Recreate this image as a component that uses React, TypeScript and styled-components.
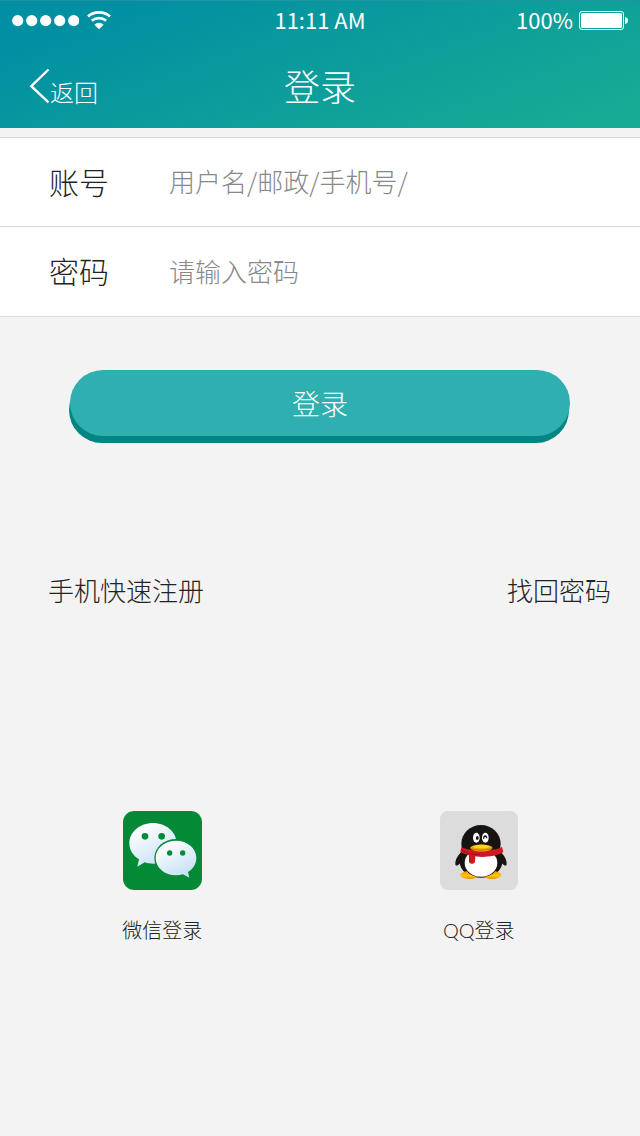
import React from 'react';
import styled, { createGlobalStyle } from 'styled-components';

const GlobalStyle = createGlobalStyle`
  * { box-sizing: border-box; }
  body {
    margin: 0;
    background: #f3f3f3;
    color: #222;
    font-family: "Noto Sans CJK SC", "Noto Sans", sans-serif;
    font-weight: 300;
  }
  button, input { font: inherit; color: inherit; }
  a { color: inherit; text-decoration: none; }
`;

const Header = styled.header`
  height: 128px;
  color: #fff;
  background: linear-gradient(160deg, #008fa3 12%, #18ab94 94%);
  border-top: 1px solid #2095a2;
`;

const StatusBar = styled.div`
  display: grid;
  grid-template-columns: 1fr auto 1fr;
  align-items: center;
  height: 39px;
  padding: 0 12px;
  font-size: 22px;
  line-height: 36px;
  font-weight: 400;
`;

const StatusText = styled.span`
  padding-bottom: 3px;
`;

const Signal = styled.div`
  display: flex;
  align-items: center;
  gap: 8px;
`;

const Power = styled.div`
  display: flex;
  align-items: center;
  justify-content: flex-end;
  gap: 6px;
`;

const TitleBar = styled.div`
  display: grid;
  grid-template-columns: 1fr auto 1fr;
  align-items: center;
  height: 88px;
  padding: 4px 28px 0;
`;

const BackButton = styled.button`
  display: flex;
  align-items: center;
  justify-self: start;
  padding: 0;
  border: 0;
  background: none;
  font-size: 24px;
  line-height: 36px;
`;

const BackText = styled.span`
  padding-top: 12px;
`;

const Title = styled.h1`
  margin: 0;
  padding-bottom: 2px;
  font-size: 36px;
  line-height: 54px;
  font-weight: inherit;
`;

const Fields = styled.div`
  margin-top: 9px;
  background: #fff;
  border-top: 1px solid #d9d9d9;
`;

const FieldRow = styled.div`
  display: flex;
  align-items: center;
  height: 89px;
  padding: 0 30px 3px 49px;
  border-bottom: 1px solid #d9d9d9;

  &:last-child { height: 90px; }
`;

const FieldLabel = styled.label`
  width: 120px;
  font-size: 30px;
  line-height: 44px;
`;

const FieldInput = styled.input`
  flex: 1;
  min-width: 0;
  height: 44px;
  padding: 0;
  border: 0;
  outline: 0;
  background: none;
  font-size: 26px;

  &::placeholder { color: #888; opacity: 1; }
`;

const SubmitArea = styled.div`
  padding: 53px 70px 0;
`;

const SubmitButton = styled.button`
  display: block;
  width: 100%;
  height: 66px;
  padding: 0;
  border: 0;
  border-radius: 33px;
  background: #2fafaf;
  box-shadow: -1px 7px 0 #008583;
  color: #fff;
  font-size: 28px;
  line-height: 64px;
`;

const Links = styled.nav`
  display: flex;
  justify-content: space-between;
  margin-top: 135px;
  padding: 0 29px 0 48px;
  font-size: 26px;
  line-height: 38px;
`;

const Social = styled.div`
  display: grid;
  grid-template-columns: 1fr 1fr;
  margin-top: 202px;
  padding: 0 3px 40px 4px;
`;

const SocialLink = styled.a`
  display: flex;
  flex-direction: column;
  align-items: center;
  justify-self: center;
  gap: 25px;
  font-family: Lato, "Noto Sans CJK SC", sans-serif;
  font-size: 20px;
  line-height: 30px;
`;

const SignalIcon = () => (
  <svg width="67" height="12" viewBox="0 0 67 12" fill="#fff" aria-hidden="true">
    {[0, 1, 2, 3, 4].map((i) => (
      <circle key={i} cx={5.7 + i * 14} cy="5.6" r="5.6" />
    ))}
  </svg>
);

const WifiIcon = () => (
  <svg width="24" height="20" viewBox="0 0 24 20" fill="none" stroke="#fff" strokeWidth="2.7" aria-hidden="true">
    <path d="M1 5.4C7 .1 17 .1 23 5.4" />
    <path d="M4.800 9.800c4.200-3.600 10.200-3.600 14.400 0" />
    <path d="M7.400 13.800c2.500-2.800 6.700-2.800 9.200 0L12 18.300z" fill="#fff" stroke="none" />
  </svg>
);

const BatteryIcon = () => (
  <svg width="49" height="19" viewBox="0 0 49 19" aria-hidden="true">
    <rect x=".5" y=".5" width="44" height="18" rx="2.5" fill="none" stroke="#fff" />
    <rect x="2" y="2" width="41" height="15" rx="1.5" fill="#fff" />
    <path d="M46 6c4 .5 4 6.500 0 7z" fill="#fff" />
  </svg>
);

const BackIcon = () => (
  <svg width="22" height="36" viewBox="0 0 22 36" fill="none" stroke="#fff" strokeWidth="2.4" aria-hidden="true">
    <path d="M20.500 1.500 3.300 18.200l17.200 16.200" />
  </svg>
);

const WechatIcon = () => (
  <svg width="79" height="79" viewBox="0 0 237 237" aria-hidden="true">
    <defs>
      <linearGradient id="bubble" x1="0" y1="0" x2=".6" y2="1">
        <stop offset=".15" stopColor="#fff" />
        <stop offset="1" stopColor="#c7e1f5" />
      </linearGradient>
    </defs>
    <rect width="237" height="237" rx="34" fill="#048a36" />
    <path d="M90 36c39 0 71 27 71 61s-32 61-71 61c-9 0-17-1-25-4l-22 13 5-22c-18-11-29-28-29-48 0-34 32-61 71-61z" fill="url(#bubble)" />
    <ellipse cx="159" cy="141" rx="65" ry="57" fill="#048a36" />
    <path d="M159 89c34 0 61 23 61 52 0 18-10 33-25 42l4 17-19-10c-7 2-14 3-21 3-34 0-61-23-61-52s27-52 61-52z" fill="url(#bubble)" />
    <g fill="#048a36">
      <circle cx="66" cy="76" r="10" />
      <circle cx="116" cy="76" r="10" />
      <circle cx="140" cy="126" r="8" />
      <circle cx="179" cy="126" r="8" />
    </g>
  </svg>
);

const QQIcon = () => (
  <svg width="78" height="79" viewBox="0 0 234 237" aria-hidden="true">
    <defs>
      <linearGradient id="foot" x1="0" y1="0" x2="0" y2="1">
        <stop offset="0" stopColor="#e99a08" />
        <stop offset=".6" stopColor="#ffc800" />
        <stop offset="1" stopColor="#e58f0a" />
      </linearGradient>
    </defs>
    <rect width="234" height="237" rx="24" fill="#dcdcdc" />
    <path d="M66 120c-13 14-21 26-20 40 1 7 7 4 16-5l8 25h106l8-25c9 9 15 12 16 5 1-14-7-26-20-40z" fill="#171313" />
    <ellipse cx="123" cy="153" rx="64" ry="47" fill="#171313" />
    <ellipse cx="123" cy="98" rx="59" ry="56" fill="#171313" />
    <ellipse cx="89" cy="192" rx="28" ry="12" fill="url(#foot)" />
    <ellipse cx="156" cy="192" rx="28" ry="12" fill="url(#foot)" />
    <path d="M123 198c-23 0-40-8-47-26h94c-7 18-24 26-47 26z" fill="#171313" />
    <ellipse cx="123" cy="156" rx="49" ry="41" fill="#fff" />
    <path d="M64 108c24 14 97 14 122 0l4 15c-20 14-62 17-84 13l-1 17c-4 7-14 7-18 0v-21c-11-2-20-5-26-9z" fill="#cf191e" />
    <path d="M64 117c20 12 36 15 56 13" fill="none" stroke="#981014" strokeWidth="3" />
    <path d="M88 132c0 9-1 16 5 22M106 134l-6 5" fill="none" stroke="#981014" strokeWidth="2" />
    <ellipse cx="109" cy="80" rx="10" ry="15" fill="#fff" />
    <ellipse cx="136" cy="80" rx="10" ry="15" fill="#fff" />
    <ellipse cx="112" cy="81" rx="4" ry="6" fill="#171313" />
    <path d="M131 83c0-10 9-11 9-1" fill="none" stroke="#171313" strokeWidth="4" />
    <path d="M90 110c9-13 60-13 68 0-8 16-60 15-68 0z" fill="#efa400" />
    <path d="M97 107c12-8 42-8 54 0-12 6-40 6-54 0z" fill="#ffd51c" />
    <path d="M91 112c17 7 48 7 66 0" fill="none" stroke="#9c6500" strokeWidth="2" />
  </svg>
);

export default function App() {
  return (
    <>
      <GlobalStyle />
      <Header>
        <StatusBar>
          <Signal>
            <SignalIcon />
            <WifiIcon />
          </Signal>
          <StatusText>11:11 AM</StatusText>
          <Power>
            <StatusText>100%</StatusText>
            <BatteryIcon />
          </Power>
        </StatusBar>
        <TitleBar>
          <BackButton type="button">
            <BackIcon />
            <BackText>返回</BackText>
          </BackButton>
          <Title>登录</Title>
        </TitleBar>
      </Header>
      <main>
        <form onSubmit={(e) => e.preventDefault()}>
          <Fields>
            <FieldRow>
              <FieldLabel htmlFor="account">账号</FieldLabel>
              <FieldInput id="account" type="text" placeholder="用户名/邮政/手机号/" />
            </FieldRow>
            <FieldRow>
              <FieldLabel htmlFor="password">密码</FieldLabel>
              <FieldInput id="password" type="password" placeholder="请输入密码" />
            </FieldRow>
          </Fields>
          <SubmitArea>
            <SubmitButton type="submit">登录</SubmitButton>
          </SubmitArea>
        </form>
        <Links>
          <a href="#register">手机快速注册</a>
          <a href="#recover">找回密码</a>
        </Links>
        <Social>
          <SocialLink href="#wechat">
            <WechatIcon />
            <span>微信登录</span>
          </SocialLink>
          <SocialLink href="#qq">
            <QQIcon />
            <span>QQ登录</span>
          </SocialLink>
        </Social>
      </main>
    </>
  );
}
